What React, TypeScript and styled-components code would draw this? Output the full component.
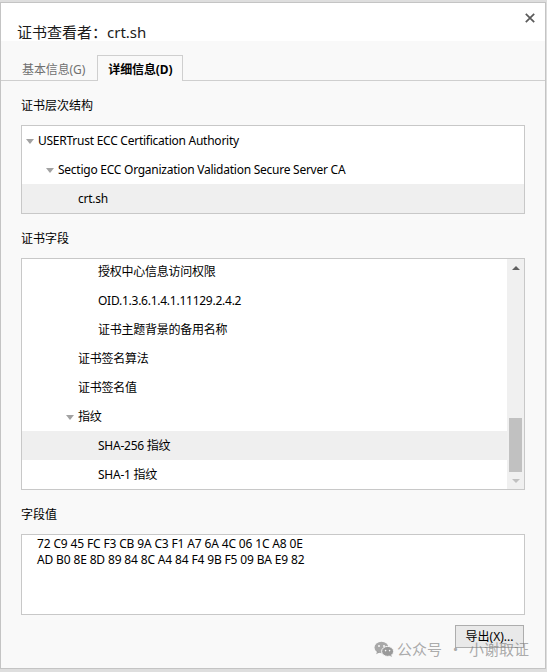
import React from "react";
import styled, { createGlobalStyle } from "styled-components";

const FONT = `"Noto Sans", "Noto Sans CJK SC", sans-serif`;

const GlobalStyle = createGlobalStyle`
  html, body { margin: 0; padding: 0; }
  body {
    background: #dedede;
    font-family: ${FONT};
    width: 547px;
    height: 672px;
    overflow: hidden;
    color: #000;
  }
  * { box-sizing: border-box; }
`;

const Dialog = styled.div`
  position: relative;
  margin-top: 2px;
  width: 546px;
  height: 667px;
  border: 1px solid #c4c4c4;
  background: #f9f9f9;
  display: flex;
  flex-direction: column;
`;

const TitleBar = styled.div`
  height: 38px;
  flex: none;
  background: #fff;
  display: flex;
  justify-content: space-between;
  align-items: flex-start;
  padding: 0 10px 0 16px;
`;

const Title = styled.div`
  padding-top: 20px;
  font-size: 15px;
  line-height: 18px;
  color: #1b1b1b;
`;

const CloseButton = styled.div`
  margin-top: 10px;
  width: 10px;
  height: 10px;
  display: flex;
`;

const TabBar = styled.div`
  flex: none;
  display: flex;
  align-items: flex-end;
  height: 40px;
  padding: 14px 0 0 9px;
  border-bottom: 1px solid #cfcfcf;
`;

const Tab = styled.div<{ $active?: boolean }>`
  height: ${(p) => (p.$active ? "26px" : "25px")};
  margin-bottom: ${(p) => (p.$active ? "-1px" : "0")};
  padding: 2px ${(p) => (p.$active ? "10px" : "11px")} 0;
  font-size: 12px;
  line-height: 23px;
  letter-spacing: -0.1px;
  white-space: nowrap;
  color: ${(p) => (p.$active ? "#000" : "#707070")};
  font-weight: ${(p) => (p.$active ? 700 : 400)};
  background: #f9f9f9;
  border: ${(p) => (p.$active ? "1px solid #cfcfcf" : "1px solid transparent")};
  border-bottom: none;
`;

const Content = styled.div`
  flex: 1;
  display: flex;
  flex-direction: column;
  padding: 0 20px;
`;

const Label = styled.div`
  font-size: 12px;
  line-height: 20px;
  margin: 15px 0 9px;
`;

const Box = styled.div`
  background: #fff;
  border: 1px solid #c8c8c8;
`;

const FieldsBox = styled(Box)`
  height: 232px;
  display: flex;
`;

const RowList = styled.div`
  flex: 1;
  display: flex;
  flex-direction: column;
  justify-content: flex-end;
  overflow: hidden;
`;

const Row = styled.div<{ $level: number; $selected?: boolean }>`
  flex: none;
  height: 29px;
  display: flex;
  align-items: center;
  padding-left: ${(p) => 4 + p.$level * 20}px;
  background: ${(p) => (p.$selected ? "#efefef" : "transparent")};
  font-size: 12px;
  line-height: 29px;
  letter-spacing: -0.25px;
  white-space: nowrap;
`;

const Toggle = styled.span<{ $open?: boolean }>`
  flex: none;
  width: 12px;
  height: 29px;
  display: flex;
  align-items: center;
  &::before {
    content: "";
    display: ${(p) => (p.$open ? "block" : "none")};
    width: 0;
    height: 0;
    margin-top: 1px;
    border-left: 4px solid transparent;
    border-right: 4px solid transparent;
    border-top: 5px solid #a2a2a2;
  }
`;

const Scrollbar = styled.div`
  flex: none;
  width: 17px;
  background: #f0f0f0;
  display: flex;
  flex-direction: column;
`;

const ScrollArrow = styled.div<{ $dir: "up" | "down"; $enabled?: boolean }>`
  flex: none;
  height: 17px;
  display: flex;
  align-items: center;
  justify-content: center;
  &::before {
    content: "";
    width: 0;
    height: 0;
    border-left: 4px solid transparent;
    border-right: 4px solid transparent;
    ${(p) =>
      p.$dir === "up"
        ? `border-bottom: 4px solid ${p.$enabled ? "#606060" : "#c0c0c0"};`
        : `border-top: 4px solid ${p.$enabled ? "#606060" : "#c0c0c0"};`}
  }
`;

const Track = styled.div`
  flex: 1;
  display: flex;
  flex-direction: column;
  justify-content: flex-end;
  padding: 0 2px;
`;

const Thumb = styled.div`
  height: 54px;
  background: #c1c1c1;
`;

const ValueBox = styled(Box)`
  height: 81px;
  padding: 1px 0 0 15px;
  font-size: 12px;
  line-height: 16px;
  letter-spacing: -0.15px;
  white-space: pre;
`;

const Footer = styled.div`
  display: flex;
  justify-content: flex-end;
  margin-top: 10px;
  padding-right: 1px;
`;

const Button = styled.div`
  width: 69px;
  height: 23px;
  border: 1px solid #adadad;
  background: #e9e9e9;
  font-size: 12px;
  line-height: 21px;
  text-align: center;
  color: #000;
`;

const Watermark = styled.div`
  position: absolute;
  right: 16px;
  bottom: 9px;
  display: flex;
  align-items: center;
  font-size: 15px;
  line-height: 20px;
  color: rgba(120, 120, 120, 0.62);
  font-family: "Noto Sans CJK SC", sans-serif;
  pointer-events: none;
`;

const Sep = styled.span`
  padding: 0 6px;
`;

const WeChatIcon = () => (
  <svg width="20" height="16" viewBox="0 0 20 16" style={{ marginRight: 3 }}>
    <ellipse cx="7.5" cy="6.5" rx="7" ry="5.8" fill="rgba(120,120,120,0.62)" />
    <path d="M3 10.5 L2.2 13.2 L5.5 11.6 Z" fill="rgba(120,120,120,0.62)" />
    <ellipse cx="13.6" cy="10.4" rx="6" ry="5" fill="#9a9a9a" stroke="#f7f7f7" strokeWidth="1" />
    <path d="M17 14 L18.2 15.8 L15.2 14.8 Z" fill="#9a9a9a" />
    <circle cx="5" cy="5" r="1" fill="#f7f7f7" />
    <circle cx="10" cy="5" r="1" fill="#f7f7f7" />
    <circle cx="11.6" cy="9.6" r="0.8" fill="#f7f7f7" />
    <circle cx="15.6" cy="9.6" r="0.8" fill="#f7f7f7" />
  </svg>
);

type Node = { label: string; level: number; open?: boolean; selected?: boolean };

const hierarchy: Node[] = [
  { label: "USERTrust ECC Certification Authority", level: 0, open: true },
  { label: "Sectigo ECC Organization Validation Secure Server CA", level: 1, open: true },
  { label: "crt.sh", level: 2, selected: true },
];

const fields: Node[] = [
  { label: "授权中心信息访问权限", level: 3 },
  { label: "OID.1.3.6.1.4.1.11129.2.4.2", level: 3 },
  { label: "证书主题背景的备用名称", level: 3 },
  { label: "证书签名算法", level: 2 },
  { label: "证书签名值", level: 2 },
  { label: "指纹", level: 2, open: true },
  { label: "SHA-256 指纹", level: 3, selected: true },
  { label: "SHA-1 指纹", level: 3 },
];

const hexValue =
  "72 C9 45 FC F3 CB 9A C3 F1 A7 6A 4C 06 1C A8 0E\nAD B0 8E 8D 89 84 8C A4 84 F4 9B F5 09 BA E9 82";

const TreeRow = ({ node }: { node: Node }) => (
  <Row $level={node.level} $selected={node.selected}>
    <Toggle $open={node.open} />
    {node.label}
  </Row>
);

export default function App() {
  return (
    <>
      <GlobalStyle />
      <Dialog>
        <TitleBar>
          <Title>证书查看者：crt.sh</Title>
          <CloseButton>
            <svg width="10" height="10" viewBox="0 0 10 10">
              <path d="M0.8 0.8 L9.2 9.2 M9.2 0.8 L0.8 9.2" stroke="#5a5a5a" strokeWidth="1.7" />
            </svg>
          </CloseButton>
        </TitleBar>
        <TabBar>
          <Tab>基本信息(G)</Tab>
          <Tab $active>详细信息(D)</Tab>
        </TabBar>
        <Content>
          <Label>证书层次结构</Label>
          <Box>
            {hierarchy.map((n) => (
              <TreeRow key={n.label} node={n} />
            ))}
          </Box>
          <Label>证书字段</Label>
          <FieldsBox>
            <RowList>
              {fields.map((n) => (
                <TreeRow key={n.label} node={n} />
              ))}
            </RowList>
            <Scrollbar>
              <ScrollArrow $dir="up" $enabled />
              <Track>
                <Thumb />
              </Track>
              <ScrollArrow $dir="down" />
            </Scrollbar>
          </FieldsBox>
          <Label>字段值</Label>
          <ValueBox>{hexValue}</ValueBox>
          <Footer>
            <Button>导出(X)...</Button>
          </Footer>
        </Content>
        <Watermark>
          <WeChatIcon />
          <span>公众号</span>
          <Sep>·</Sep>
          <span>小谢取证</span>
        </Watermark>
      </Dialog>
    </>
  );
}
